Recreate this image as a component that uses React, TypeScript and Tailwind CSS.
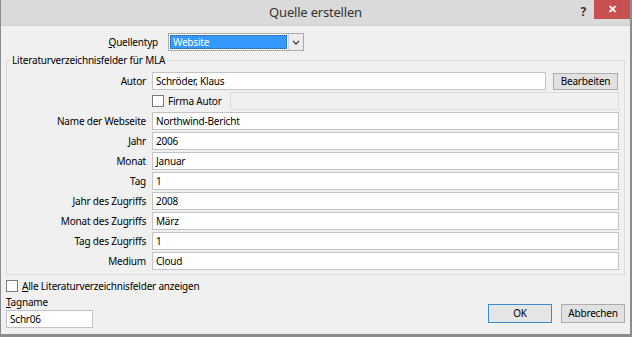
import React from 'react';

const font = { fontFamily: '"Noto Sans", "Open Sans", sans-serif' };

const rows = [
  { label: 'Name der Webseite', value: 'Northwind-Bericht' },
  { label: 'Jahr', value: '2006' },
  { label: 'Monat', value: 'Januar' },
  { label: 'Tag', value: '1' },
  { label: 'Jahr des Zugriffs', value: '2008' },
  { label: 'Monat des Zugriffs', value: 'März' },
  { label: 'Tag des Zugriffs', value: '1' },
  { label: 'Medium', value: 'Cloud' },
];

function Field({ value, className = '' }: { value: string; className?: string }) {
  return (
    <div
      className={`flex h-[18px] items-center border border-[#c3c3c3] bg-white pl-[3px] text-[10px] text-black ${className}`}
    >
      {value}
    </div>
  );
}

function Checkbox() {
  return <div className="h-[12px] w-[12px] shrink-0 border border-[#7a7a7a] bg-white" />;
}

function Button({ label, primary }: { label: string; primary?: boolean }) {
  return (
    <div
      className={`flex h-[19px] w-[64px] items-center justify-center text-[10px] text-black ${
        primary ? 'border border-[#3c8ad8] bg-[#e5e5e5]' : 'border border-[#adadad] bg-[#e1e1e1]'
      }`}
    >
      {label}
    </div>
  );
}

export default function App() {
  return (
    <div
      className="flex h-[337px] w-[632px] flex-col overflow-hidden border-b-[3px] border-l border-r-[2px] border-[#8c8c8c] bg-[#f0f0f0] tracking-[-0.2px]"
      style={font}
    >
      {/* title bar */}
      <div className="flex h-[26px] shrink-0 items-start border-b border-[#cfcfcf] bg-[#dadada]">
        <div className="w-[60px]" />
        <div className="flex h-[26px] flex-1 items-center justify-center text-[13px] text-[#333]">
          Quelle erstellen
        </div>
        <div className="flex w-[60px] items-start justify-end">
          <span className="mr-[8px] mt-[3px] text-[12px] font-bold text-[#333]">?</span>
          <div className="flex h-[19px] w-[36px] items-center justify-center bg-[#c75050] text-[11px] font-bold text-white">
            ✕
          </div>
        </div>
      </div>

      {/* source type */}
      <div className="mt-[7px] flex items-center">
        <div className="w-[157px] text-right text-[10px] text-black">
          <span className="underline">Q</span>uellentyp
        </div>
        <div className="ml-[10px] flex h-[18px] w-[136px] border border-[#acacac] bg-white">
          <div className="m-[1px] flex flex-1 items-center border border-dotted border-[#1c5fa8] bg-[#3399ff] pl-[2px] text-[10px] text-white">
            Website
          </div>
          <div className="flex w-[15px] items-center justify-center border-l border-[#d0d0d0] bg-[#ececec]">
            <svg width="8" height="5" viewBox="0 0 8 5">
              <path d="M1 1 L4 4 L7 1" stroke="#444" strokeWidth="1.3" fill="none" />
            </svg>
          </div>
        </div>
      </div>

      {/* group box */}
      <div className="relative ml-[5px] mr-[5px] mt-[9px] border border-[#dcdcdc] pb-[4px] pr-[5px] pt-[11px]">
        <div className="absolute left-[3px] top-[-8px] bg-[#f0f0f0] px-[2px] text-[10px] text-black">
          Literaturverzeichnisfelder für MLA
        </div>

        <div className="flex items-center">
          <div className="w-[139px] text-right text-[10px] text-black">Autor</div>
          <Field value="Schröder, Klaus" className="ml-[6px] w-[394px]" />
          <div className="ml-[7px] flex h-[17px] w-[65px] items-center justify-center border border-[#adadad] bg-[#e1e1e1] text-[10px] text-black">
            Bearbeiten
          </div>
        </div>

        <div className="mt-[2px] flex h-[18px] items-center">
          <div className="ml-[145px] flex items-center gap-[4px]">
            <Checkbox />
            <span className="text-[10px] text-black">Firma Autor</span>
          </div>
          <div className="ml-auto h-[18px] w-[389px] border border-[#dcdcdc] bg-[#f0f0f0]" />
        </div>

        {rows.map((r) => (
          <div key={r.label} className="mt-[2px] flex items-center">
            <div className="w-[139px] text-right text-[10px] text-black">{r.label}</div>
            <Field value={r.value} className="ml-[6px] flex-1" />
          </div>
        ))}
      </div>

      {/* bottom */}
      <div className="ml-[5px] mr-[5px] mt-[5px] flex items-end justify-between">
        <div className="flex flex-col">
          <div className="flex h-[12px] items-center gap-[4px]">
            <Checkbox />
            <span className="text-[10px] leading-[12px] text-black">
              <span className="underline">A</span>lle Literaturverzeichnisfelder anzeigen
            </span>
          </div>
          <div className="mt-[4px] text-[10px] leading-[12px] text-black">
            <span className="underline">T</span>agname
          </div>
          <Field value="Schr06" className="mt-[2px] w-[87px]" />
        </div>
        <div className="mb-[5px] flex gap-[9px]">
          <Button label="OK" primary />
          <Button label="Abbrechen" />
        </div>
      </div>
    </div>
  );
}
